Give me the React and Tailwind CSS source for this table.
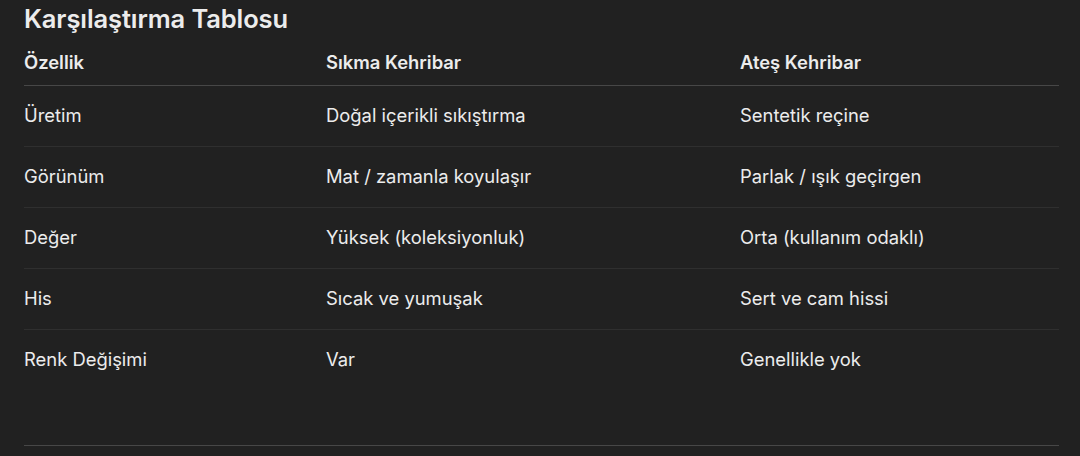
const rows = [
  ["Üretim", "Doğal içerikli sıkıştırma", "Sentetik reçine"],
  ["Görünüm", "Mat / zamanla koyulaşır", "Parlak / ışık geçirgen"],
  ["Değer", "Yüksek (koleksiyonluk)", "Orta (kullanım odaklı)"],
  ["His", "Sıcak ve yumuşak", "Sert ve cam hissi"],
  ["Renk Değişimi", "Var", "Genellikle yok"],
];

export default function App() {
  return (
    <div className="w-[1080px] h-[456px] overflow-hidden bg-[#212121] text-[#ececec] font-['Inter',sans-serif] pl-6 pr-[21px]">
      <h2 className="text-[25.5px] font-semibold leading-[30px] mt-[4px] tracking-[-0.1px]">Karşılaştırma Tablosu</h2>
      <div className="mt-[6px] border-b border-[#474747]">
        <table className="w-full border-collapse text-left text-[18.4px]">
          <thead>
            <tr className="border-b border-[#474747]">
              <th className="w-[302px] font-semibold h-[45px] align-middle pt-[2px]">Özellik</th>
              <th className="w-[414px] font-semibold align-middle pt-[2px]">Sıkma Kehribar</th>
              <th className="font-semibold align-middle pt-[2px]">Ateş Kehribar</th>
            </tr>
          </thead>
          <tbody>
            {rows.map((r, i) => (
              <tr key={i} className={i < rows.length - 1 ? "border-b border-[#2f2f2f]" : ""}>
                {r.map((c, j) => (
                  <td key={j} className="h-[61px] align-middle font-normal pt-[1px]">{c}</td>
                ))}
              </tr>
            ))}
          </tbody>
        </table>
        <div className="h-[55px]" />
      </div>
    </div>
  );
}
